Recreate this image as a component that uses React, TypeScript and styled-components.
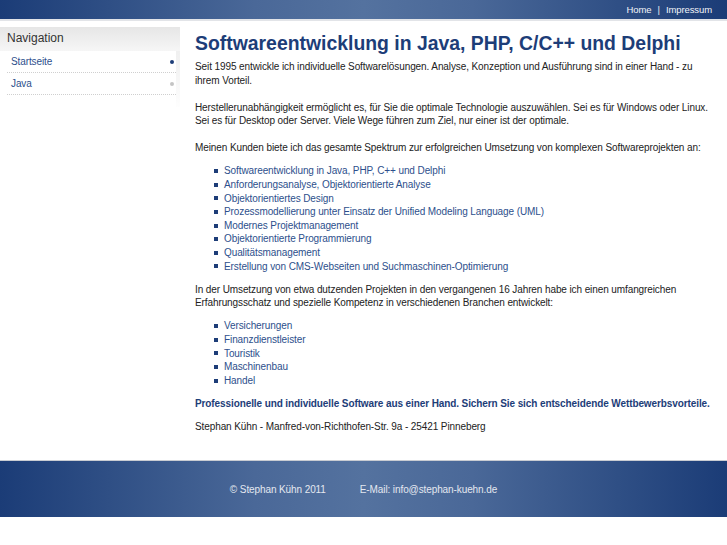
import React, { FC } from 'react';
import styled, { createGlobalStyle } from 'styled-components';

const TEXT_COLOR = '#222';
const LINK_COLOR = '#2d4f8c';
const HEAD_COLOR = '#1d3d78';
const BAR_GRADIENT =
  'linear-gradient(to right, #1b3c77 0%, #2f4f85 15%, #4a6898 35%, #54729f 50%, #4a6898 65%, #2f4f85 85%, #1b3c77 100%)';

const GlobalStyle = createGlobalStyle`
  html, body {
    margin: 0;
    padding: 0;
    background: #fff;
  }
  body {
    font-family: "Liberation Sans", Arial, sans-serif;
    font-size: 10px;
    letter-spacing: -0.1px;
    color: ${TEXT_COLOR};
  }
`;

const Page = styled.div`
  width: 727px;
  display: flex;
  flex-direction: column;
`;

const TopBar = styled.div`
  height: 19px;
  background: ${BAR_GRADIENT};
  border-bottom: 2px solid #e2e4e8;
  display: flex;
  justify-content: flex-end;
  align-items: center;
  padding-right: 15px;
  gap: 6px;
  font-size: 9.5px;
  color: #e8ecf4;
`;

const TopLink = styled.a`
  color: #f2f4f8;
  text-decoration: none;
`;

const Body = styled.div`
  display: flex;
  align-items: flex-start;
  padding-top: 6px;
`;

const Sidebar = styled.div`
  width: 180px;
  flex-shrink: 0;
  background: linear-gradient(#ebebeb 0px, #f3f3f3 40px, #fff 85px);
`;

const SideHeader = styled.div`
  height: 23px;
  padding: 1px 0 0 7px;
  font-size: 12px;
  letter-spacing: 0;
  line-height: 20px;
  color: #333;
  background: linear-gradient(#e6e6e6, #f6f6f6);
`;

const SideList = styled.ul`
  list-style: none;
  margin: 0 4px 0 0;
  padding: 0 0 12px 0;
  background: #fff;
`;

const SideItem = styled.li<{ $active?: boolean }>`
  margin-left: 7px;
  padding: 0 2px 0 4px;
  height: 21px;
  border-bottom: 1px dotted #cfcfcf;
  display: flex;
  align-items: center;
  justify-content: space-between;

  a {
    color: ${LINK_COLOR};
    text-decoration: none;
  }

  &::after {
    content: '';
    width: 4px;
    height: 4px;
    border-radius: 50%;
    background: ${(p) => (p.$active ? HEAD_COLOR : '#c4c4c4')};
  }
`;

const Main = styled.div`
  flex: 1;
  padding: 0 14px 0 15px;
  line-height: 13.6px;
`;

const Title = styled.h1`
  margin: 4px 0 5px;
  font-size: 19.4px;
  letter-spacing: 0;
  line-height: 24px;
  font-weight: bold;
  color: ${HEAD_COLOR};
`;

const Para = styled.p<{ $strong?: boolean; $tight?: boolean }>`
  margin: 0 0 ${(p) => (p.$tight ? '9.5px' : '13.5px')};
  color: ${(p) => (p.$strong ? HEAD_COLOR : TEXT_COLOR)};
  font-weight: ${(p) => (p.$strong ? 'bold' : 'normal')};
`;

const List = styled.ul`
  list-style: none;
  margin: 0 0 9.5px;
  padding: 0 0 0 19px;
`;

const ListItem = styled.li`
  display: flex;
  align-items: center;
  gap: 6px;
  color: ${LINK_COLOR};

  &::before {
    content: '';
    width: 4px;
    height: 4px;
    background: ${HEAD_COLOR};
    flex-shrink: 0;
  }
`;

const Footer = styled.div`
  margin-top: 13px;
  height: 56px;
  border-top: 1px solid #c9ccd2;
  background: ${BAR_GRADIENT};
  display: flex;
  justify-content: center;
  align-items: center;
  gap: 34px;
  color: #e4e8f0;
  font-size: 10px;
`;

const services = [
  'Softwareentwicklung in Java, PHP, C++ und Delphi',
  'Anforderungsanalyse, Objektorientierte Analyse',
  'Objektorientiertes Design',
  'Prozessmodellierung unter Einsatz der Unified Modeling Language (UML)',
  'Modernes Projektmanagement',
  'Objektorientierte Programmierung',
  'Qualitätsmanagement',
  'Erstellung von CMS-Webseiten und Suchmaschinen-Optimierung',
];

const branches = ['Versicherungen', 'Finanzdienstleister', 'Touristik', 'Maschinenbau', 'Handel'];

const App: FC = () => {
  return (
    <Page>
      <GlobalStyle />
      <TopBar>
        <TopLink href="#">Home</TopLink>
        <span>|</span>
        <TopLink href="#">Impressum</TopLink>
      </TopBar>
      <Body>
        <Sidebar>
          <SideHeader>Navigation</SideHeader>
          <SideList>
            <SideItem $active>
              <a href="#">Startseite</a>
            </SideItem>
            <SideItem>
              <a href="#">Java</a>
            </SideItem>
          </SideList>
        </Sidebar>
        <Main>
          <Title>Softwareentwicklung in Java, PHP, C/C++ und Delphi</Title>
          <Para>
            Seit 1995 entwickle ich individuelle Softwarelösungen. Analyse, Konzeption und Ausführung sind in einer Hand - zu ihrem Vorteil.
          </Para>
          <Para>
            Herstellerunabhängigkeit ermöglicht es, für Sie die optimale Technologie auszuwählen. Sei es für Windows oder Linux. Sei es für Desktop oder Server. Viele Wege führen zum Ziel, nur einer ist der optimale.
          </Para>
          <Para $tight>Meinen Kunden biete ich das gesamte Spektrum zur erfolgreichen Umsetzung von komplexen Softwareprojekten an:</Para>
          <List>
            {services.map((s) => (
              <ListItem key={s}>{s}</ListItem>
            ))}
          </List>
          <Para $tight>
            In der Umsetzung von etwa dutzenden Projekten in den vergangenen 16 Jahren habe ich einen umfangreichen Erfahrungsschatz und spezielle Kompetenz in verschiedenen Branchen entwickelt:
          </Para>
          <List>
            {branches.map((b) => (
              <ListItem key={b}>{b}</ListItem>
            ))}
          </List>
          <Para $strong $tight>
            Professionelle und individuelle Software aus einer Hand. Sichern Sie sich entscheidende Wettbewerbsvorteile.
          </Para>
          <Para>Stephan Kühn - Manfred-von-Richthofen-Str. 9a - 25421 Pinneberg</Para>
        </Main>
      </Body>
      <Footer>
        <span>© Stephan Kühn 2011</span>
        <span>E-Mail: info@stephan-kuehn.de</span>
      </Footer>
    </Page>
  );
};

export default App;
